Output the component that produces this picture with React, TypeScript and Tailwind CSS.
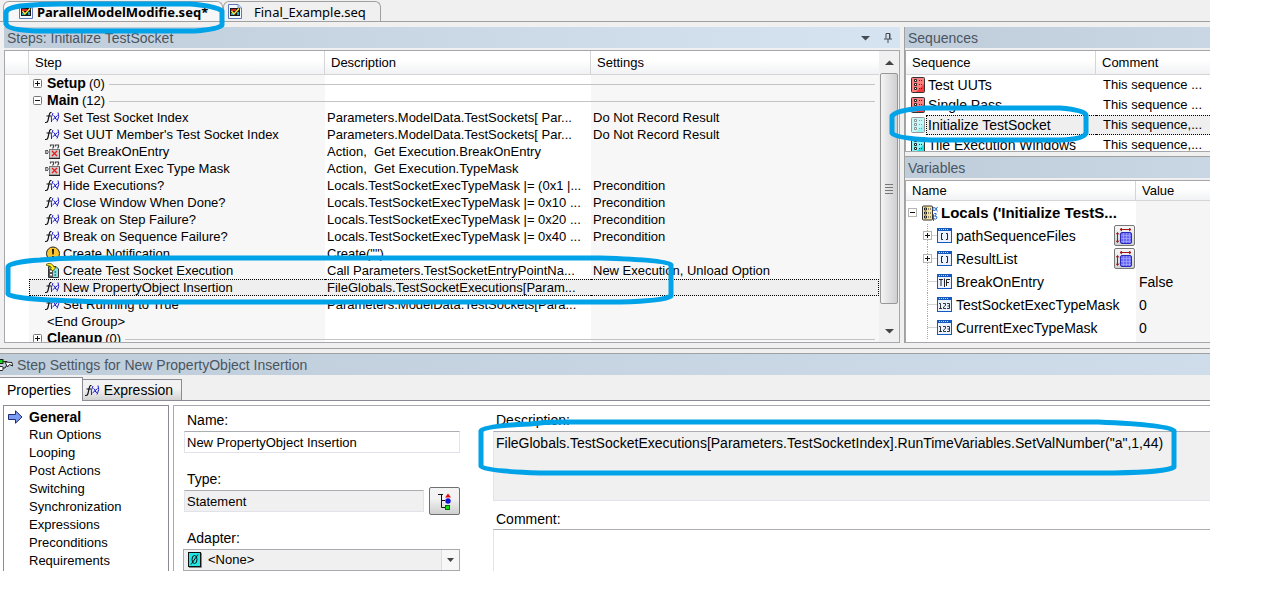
import React from "react";

const FX = () => (
  <svg aria-hidden="true" className="h-[15px] w-[15px] shrink-0" viewBox="0 0 15 15" fill="none">
    <g stroke="#111">
      <path d="M6.5 2.5H5.5Q4.5 3 4 6L3 10.500Q2.500 12.500 1 12.500H0" strokeWidth="1.200" />
      <path d="M1.500 6H6" />
    </g>
    <g stroke="#1a1ac8">
      <path d="M8 3Q5.500 7 6.500 12M13 2.500Q15 6 12 11.500" />
      <path d="M8.500 5.500Q9.500 5.500 10 7.500Q10.500 9.500 12 9.500M12.500 5.500L7.500 10" />
    </g>
  </svg>
);

const Robot = () => (
  <svg aria-hidden="true" className="h-[15px] w-[15px] shrink-0" viewBox="0 0 15 15" fill="none">
    <path d="M5.500 2.500V1H8.500V3L7.500 4.500M10.500 2.500V1H13.500V3L12.500 4.500" stroke="#444" strokeWidth="1.200" />
    <path d="M3 6.500H.8V9.500H3M2 8H5" stroke="#555" strokeWidth="1.200" />
    <rect x="4.500" y="5.500" width="10" height="8.500" fill="#cbcbcb" stroke="#777" />
    <path d="M7 7L12 12M12 7L7 12" stroke="#f01818" strokeWidth="1.200" />
    <path d="M4 14.500H15V6" stroke="#222" />
  </svg>
);

const Notice = () => (
  <svg aria-hidden="true" className="h-[15px] w-[15px] shrink-0" viewBox="0 0 15 15">
    <circle cx="8" cy="7.500" r="6.500" fill="#fdc52d" stroke="#222" />
    <path d="M7 3H9L8.700 8.500H7.300ZM7 10H9V12H7Z" fill="#111" />
  </svg>
);

const CallSeq = () => (
  <svg aria-hidden="true" className="h-[15px] w-[15px] shrink-0" viewBox="0 0 15 15">
    <path d="M3.500 3.500H11L13.500 6V14.500H3.500Z" fill="#7ee4e4" stroke="#333" />
    <path d="M4 6H8V14H4Z" fill="#555" />
    <path d="M5 7.500H7V9H5ZM5 11H7V12.500H5Z" fill="#fff" />
    <path d="M9.500 9H11M9.500 12H11" stroke="#222" />
    <path d="M1.500 1Q7 -1 9 4H11L8 8L4.500 5H6.500Q5.500 2 1.500 2.500Z" fill="#ffee20" stroke="#554d00" strokeWidth=".8" />
  </svg>
);

const FileIcon = () => (
  <svg aria-hidden="true" className="h-[15px] w-[14px] shrink-0" viewBox="0 0 14 15">
    <path d="M.5.500H10L13.500 4V14.500H.5Z" fill="#f4f8ff" stroke="#5b79b9" />
    <path d="M10 .5V4H13.500" fill="#c6d6ed" stroke="#7b92c2" />
    <rect x="2" y="4" width="10" height="8" fill="#181818" />
    <path d="M3 5H8V7H3Z" fill="#d82424" />
    <path d="M3 9H6V11H3ZM9 8H11V11H9Z" fill="#23a6b8" />
    <path d="M3.500 7L6 10L11 4.500" fill="none" stroke="#ffe936" strokeWidth="1.400" />
  </svg>
);

const SeqIcon = ({ light, dark, faded = false }: { light: string; dark: string; faded?: boolean }) => (
  <svg aria-hidden="true" className={faded ? "h-4 w-[14px] shrink-0 opacity-50" : "h-4 w-[14px] shrink-0"} viewBox="0 0 14 16" fill="none">
    <rect x=".5" y=".5" width="13" height="15" rx="1" fill={light} stroke="#333" />
    <path d="M13 7V15H5Z" fill={dark} />
    <path d="M3.500 2.500H5.500V4.500H3.500ZM3.500 6.500H5.500V8.500H3.500ZM3.500 10.500H5.500V12.500H3.500Z" stroke="#222" fill="#fff" />
    <path d="M8 3.500H12M8 7.500H12M8 11.500H12" stroke="#333" strokeDasharray="1 1" />
  </svg>
);

const LocalsIcon = () => (
  <svg aria-hidden="true" className="h-4 w-4 shrink-0" viewBox="0 0 16 16" fill="none">
    <rect x=".5" y="1" width="10" height="14" rx="1" fill="#f8e3a0" stroke="#333" />
    <path d="M2.500 3H4.500V5H2.500ZM2.500 7H4.500V9H2.500ZM2.500 11H4.500V13H2.500Z" stroke="#222" fill="#fff" />
    <path d="M6 4H9M6 8H9M6 12H9" stroke="#222" strokeDasharray="1 1" />
    <path d="M15.500 2Q13.500 6.500 11.500 5.500Q10 4 11.500 2.500Q13.500 1.500 15.500 6.500" stroke="#1d6cc4" fill="#fff" />
    <path d="M11.500 16V9.500Q12 8 14 8.500Q15 10 12.500 11Q15.500 11 15 13Q13.500 15 11.500 13.500" stroke="#1d6cc4" fill="#fff" />
  </svg>
);

const VarIcon = ({ kind }: { kind: string }) => (
  <svg aria-hidden="true" className="h-[15px] w-[15px] shrink-0" viewBox="0 0 15 15" fill="none">
    <rect x=".5" y=".5" width="14" height="14" fill="#eaf3ff" stroke="#1458c0" />
    <path d="M1 1H14V3H1Z" fill="#1458c0" />
    <path d="M2 1.500H12" stroke="#ffe04a" strokeDasharray="1 1" />
    {kind === "array" && <path d="M6 5.500H4.500V11.500H6M9 5.500H10.500V11.500H9" stroke="#222" />}
    {kind === "bool" && <path d="M2 5.500H6M4 5.500V12M7.500 4.500V13M9.500 12V5.500H13M9.500 8.500H12" stroke="#222" />}
    {kind === "num" && (
      <path d="M2 6.500H3.500V12M2 11.500H5M6 6.500H8.500V8.500L6.500 10V11.500H9M10 6.500H12.500V11.500H10M10.500 9H12.500" stroke="#222" strokeWidth=".9" />
    )}
  </svg>
);

const Expander = ({ open, pale = false }: { open: boolean; pale?: boolean }) => (
  <button type="button" aria-label={open ? "Collapse" : "Expand"} className="block h-[9px] w-[9px] shrink-0">
    <svg className="block h-[9px] w-[9px]" viewBox="0 0 9 9">
      <rect x=".5" y=".5" width="8" height="8" rx={pale ? 0 : 1} fill="#fff" stroke={pale ? "#b4b4b4" : "#777"} />
      <path d={open ? "M2 4.500H7" : "M2 4.500H7M4.500 2V7"} stroke="#111" />
    </svg>
  </button>
);

const stepIcons = { fx: FX, robot: Robot, notice: Notice, call: CallSeq };

type Row = {
  group?: boolean;
  open?: boolean;
  count?: string;
  icon?: keyof typeof stepIcons;
  name: string;
  desc?: string;
  set?: string;
  sel?: boolean;
};

const steps: Row[] = [
  { group: true, name: "Setup", count: "(0)" },
  { group: true, open: true, name: "Main", count: "(12)" },
  { icon: "fx", name: "Set Test Socket Index", desc: "Parameters.ModelData.TestSockets[ Par...", set: "Do Not Record Result" },
  { icon: "fx", name: "Set UUT Member's Test Socket Index", desc: "Parameters.ModelData.TestSockets[ Par...", set: "Do Not Record Result" },
  { icon: "robot", name: "Get BreakOnEntry", desc: "Action,  Get Execution.BreakOnEntry" },
  { icon: "robot", name: "Get Current Exec Type Mask", desc: "Action,  Get Execution.TypeMask" },
  { icon: "fx", name: "Hide Executions?", desc: "Locals.TestSocketExecTypeMask |= (0x1 |...", set: "Precondition" },
  { icon: "fx", name: "Close Window When Done?", desc: "Locals.TestSocketExecTypeMask |= 0x10 ...", set: "Precondition" },
  { icon: "fx", name: "Break on Step Failure?", desc: "Locals.TestSocketExecTypeMask |= 0x20 ...", set: "Precondition" },
  { icon: "fx", name: "Break on Sequence Failure?", desc: "Locals.TestSocketExecTypeMask |= 0x40 ...", set: "Precondition" },
  { icon: "notice", name: "Create Notification", desc: 'Create("")' },
  { icon: "call", name: "Create Test Socket Execution", desc: "Call Parameters.TestSocketEntryPointNa...", set: "New Execution, Unload Option" },
  { icon: "fx", name: "New PropertyObject Insertion", desc: "FileGlobals.TestSocketExecutions[Param...", sel: true },
  { icon: "fx", name: "Set Running to True", desc: "Parameters.ModelData.TestSockets[Para..." },
  { name: "<End Group>" },
  { group: true, name: "Cleanup", count: "(0)" },
];

const sequences = [
  { name: "Test UUTs", comment: "This sequence ...", light: "#ff8080", dark: "#f83a3a" },
  { name: "Single Pass", comment: "This sequence ...", light: "#ff8080", dark: "#f83a3a" },
  { name: "Initialize TestSocket", comment: "This sequence,...", light: "#8cf4f4", dark: "#3ce6e6", sel: true },
  { name: "Tile Execution Windows", comment: "This sequence,...", light: "#8cf4f4", dark: "#20e0e0" },
];

const variables = [
  { name: "pathSequenceFiles", kind: "array", value: "" },
  { name: "ResultList", kind: "array", value: "" },
  { name: "BreakOnEntry", kind: "bool", value: "False" },
  { name: "TestSocketExecTypeMask", kind: "num", value: "0" },
  { name: "CurrentExecTypeMask", kind: "num", value: "0" },
];

const pages = ["General", "Run Options", "Looping", "Post Actions", "Switching", "Synchronization", "Expressions", "Preconditions", "Requirements"];

const th = "border-b border-[#d5d5d5] bg-linear-to-b from-white from-40% to-[#f1f2f4] p-0 text-left font-normal";
const titleBar = "flex h-[21px] shrink-0 items-center bg-linear-to-r from-[#bfcddb] text-[14px] leading-4 text-[#4a5560]";
const label = "block text-[14px] leading-4";
const sunken = "block border border-[#e2e3ea] border-t-[#abadb3] leading-4 outline-none";

const StepRow = ({ row }: { row: Row }) => {
  const Icon = row.icon ? stepIcons[row.icon] : null;
  if (row.group) {
    return (
      <tr>
        <td />
        <td className="h-[17px] bg-[#f7f7f7] p-0">
          <div className="flex items-center pl-1">
            <Expander open={!!row.open} />
            <span className="pl-[5px] text-[14px] font-bold">{row.name}</span>
            <span className="pr-1 pl-[3px]">{row.count}</span>
            <span className="mt-px h-px flex-1 bg-[#c4c4c4]" />
          </div>
        </td>
        <td className="p-0"><div className="mt-px h-px bg-[#c4c4c4]" /></td>
        <td className="bg-[#f7f7f7] p-0"><div className="mt-px mr-1 h-px bg-[#c4c4c4]" /></td>
      </tr>
    );
  }
  const edge = row.sel ? "border-y border-dotted border-black bg-[#efefef] " : "";
  const indent = row.sel ? " gap-[3px] pl-[15px]" : Icon ? " gap-[3px] pl-4" : " pl-[18px]";
  return (
    <tr>
      <td />
      <td className={edge + (row.sel ? "h-[17px] border-l p-0" : "h-[17px] bg-[#f7f7f7] p-0")}>
        <div className={"flex h-[15px] items-center" + indent}>
          {Icon && <Icon />}
          <span>{row.name}</span>
        </div>
      </td>
      <td className={edge + "p-0 pl-[2px] whitespace-pre"}>{row.desc}</td>
      <td className={edge + (row.sel ? "border-r p-0" : "bg-[#f7f7f7] p-0 pl-[2px]")}>{row.set}</td>
    </tr>
  );
};

const Steps = () => (
  <section className="flex min-w-0 flex-1 flex-col pl-1">
    <div className={titleBar + " to-[#d6e4f2] pl-[3px]"}>
      <h2 className="flex-1">Steps: Initialize TestSocket</h2>
      <button type="button" aria-label="Menu" className="mr-[14px] block">
        <svg className="block h-2 w-[9px]" viewBox="0 0 9 8"><path d="M0 2H9L4.500 6.500Z" fill="#444c55" /></svg>
      </button>
      <button type="button" aria-label="Pin" className="mr-2 block">
        <svg className="block h-[10px] w-2" viewBox="0 0 8 10" fill="none" stroke="#444c55">
          <path d="M2 5.500V.5H6V5.500M0 6H8M4 6V10" /><path d="M5.500 1V6" />
        </svg>
      </button>
    </div>
    <div className="mt-[2px] flex min-h-0 flex-1 overflow-hidden border border-[#a5a7ad] bg-white">
      <div className="min-w-0 flex-1 bg-[linear-gradient(90deg,#fff_586px,#f7f7f7_586px)]">
        <table className="w-full table-fixed border-separate border-spacing-0 text-[13px] leading-[15px]">
          <colgroup>
            <col className="w-6" />
            <col className="w-[296px]" />
            <col className="w-[266px]" />
            <col />
          </colgroup>
          <thead>
            <tr>
              <th aria-label="Breakpoints" className={th + " h-6 border-r"} />
              <th className={th + " border-r pl-[6px]"}>Step</th>
              <th className={th + " border-r pl-[6px]"}>Description</th>
              <th className={th + " pl-[6px]"}>Settings</th>
            </tr>
          </thead>
          <tbody>{steps.map((r) => <StepRow key={r.name} row={r} />)}</tbody>
        </table>
      </div>
      <div className="flex w-5 shrink-0 flex-col items-center bg-[#f0f0f0]">
        <button type="button" aria-label="Scroll up" className="flex h-[22px] w-full items-center justify-center">
          <svg className="block h-[5px] w-[9px]" viewBox="0 0 9 5"><path d="M0 5H9L4.500 .5Z" fill="#444" /></svg>
        </button>
        <div className="flex w-[18px] flex-1 flex-col items-center justify-center gap-[2px] rounded-xs border border-[#979797] bg-linear-to-r from-[#f4f4f4] to-[#cfcfd2]">
          <span className="h-px w-2 bg-[#777]" />
          <span className="h-px w-2 bg-[#777]" />
          <span className="h-px w-2 bg-[#777]" />
          <span className="h-px w-2 bg-[#777]" />
        </div>
        <button type="button" aria-label="Scroll down" className="mt-5 flex h-[18px] w-full items-start justify-center pt-[5px]">
          <svg className="block h-[5px] w-[9px]" viewBox="0 0 9 5"><path d="M0 0H9L4.500 4.500Z" fill="#444" /></svg>
        </button>
      </div>
    </div>
  </section>
);

const Sequences = () => (
  <section className="flex flex-col">
    <h2 className={titleBar + " to-[#c9d6e4] pl-[3px]"}>Sequences</h2>
    <div className="mt-[2px] h-[102px] overflow-hidden border border-r-0 border-[#a5a7ad] bg-white">
      <table className="w-full table-fixed border-separate border-spacing-0 text-[13px] leading-4">
        <colgroup><col className="w-[190px]" /><col /></colgroup>
        <thead>
          <tr>
            <th className={th + " h-6 border-r pl-[6px]"}>Sequence</th>
            <th className={th + " pl-[6px]"}>Comment</th>
          </tr>
        </thead>
        <tbody>
          {sequences.map((s) => (
            <tr key={s.name}>
              <td className="h-5 p-0 text-[14px]">
                <div className="flex h-5 items-center gap-px pl-[5px]">
                  <SeqIcon light={s.light} dark={s.dark} faded={s.sel} />
                  <span className={s.sel ? "h-5 flex-1 border-y border-l border-dotted border-black bg-[#efefef] pt-px pl-px whitespace-nowrap" : "pl-[2px] whitespace-nowrap"}>{s.name}</span>
                </div>
              </td>
              <td className={s.sel ? "border-y border-dotted border-black bg-[#efefef] p-0 pl-[7px] whitespace-nowrap" : "p-0 pl-[7px] whitespace-nowrap"}>{s.comment}</td>
            </tr>
          ))}
        </tbody>
      </table>
    </div>
  </section>
);

const SizeButton = ({ name }: { name: string }) => (
  <button type="button" aria-label={"Resize " + name} className="mr-px ml-auto flex h-[21px] w-[21px] items-center justify-center rounded-xs border border-[#777] bg-linear-to-b from-[#f7f7f7] to-[#d0d0d0]">
    <svg className="block h-4 w-[17px] shrink-0" viewBox="0 0 17 16" fill="none">
      <rect x="4.500" y="4.500" width="11" height="11" rx="1.500" fill="#6a6af6" stroke="#2a2ab8" />
      <path d="M7.500 5V15M10.500 5V15M13.500 5V15M5 7.500H15M5 10.500H15M5 13.500H15" stroke="#a3a6ff" strokeWidth=".7" />
      <path d="M4 1.500H15M6 0L4 1.500L6 3M13 0L15 1.500L13 3M1.500 5V14M0 6.500L1.500 4.500L3 6.500M0 12.500L1.500 14.500L3 12.500" stroke="#a01818" />
    </svg>
  </button>
);

const Variables = () => (
  <section className="mt-1 flex min-h-0 flex-1 flex-col border-t border-[#a0a0a0]">
    <h2 className={titleBar + " to-[#c9d6e4] pl-[3px]"}>Variables</h2>
    <div className="mt-[2px] min-h-0 flex-1 overflow-hidden border border-r-0 border-[#a5a7ad] bg-[linear-gradient(90deg,#fff_230px,#f5f5f5_230px)]">
      <table className="w-full table-fixed border-separate border-spacing-0 text-[14px] leading-4">
        <colgroup><col className="w-[230px]" /><col /></colgroup>
        <thead>
          <tr className="text-[13px]">
            <th className={th + " h-5 border-r pl-[6px]"}>Name</th>
            <th className={th + " pl-[6px]"}>Value</th>
          </tr>
        </thead>
        <tbody>
          <tr>
            <td className="h-[23px] p-0">
              <div className="flex items-center pl-[2px] whitespace-nowrap">
                <Expander open pale />
                <span className="w-[5px]" />
                <LocalsIcon />
                <span className="pl-[3px] text-[15px] font-bold">Locals ('Initialize TestS...</span>
              </div>
            </td>
            <td />
          </tr>
          {variables.map((v) => (
            <tr key={v.name}>
              <td className="p-0">
                <div className="flex h-[23px] items-center whitespace-nowrap">
                  <div className="grid h-full w-[31px] shrink-0 place-items-center pl-3 *:col-start-1 *:row-start-1">
                    <svg aria-hidden="true" className="block h-[23px] w-[19px]" viewBox="0 0 19 23" fill="none" stroke="#aaa" strokeDasharray="1 1">
                      <path d="M9.500 0V23M9.500 11.500H19" />
                    </svg>
                    {v.kind === "array" && <Expander open={false} pale />}
                  </div>
                  <VarIcon kind={v.kind} />
                  <span className="pl-1">{v.name}</span>
                  {v.kind === "array" && <SizeButton name={v.name} />}
                </div>
              </td>
              <td className="p-0 pl-[3px]">{v.value}</td>
            </tr>
          ))}
        </tbody>
      </table>
    </div>
  </section>
);

const FileTabs = () => (
  <div role="tablist" className="flex h-[22px] items-end border-b border-[#a0a0a0] pl-[3px] font-['Noto_Sans',sans-serif] text-[13px] leading-4">
    <button type="button" role="tab" aria-selected="true" className="flex h-5 w-[220px] items-center gap-1 rounded-t-md border border-b-0 border-[#a0a0a0] bg-[#f7f7f7] pl-[15px] font-bold whitespace-nowrap">
      <FileIcon />ParallelModelModifie.seq*
    </button>
    <button type="button" role="tab" aria-selected="false" className="flex h-5 w-[158px] items-center gap-3 rounded-t-md border border-b-0 border-[#a0a0a0] pl-1 whitespace-nowrap">
      <FileIcon />Final_Example.seq
    </button>
  </div>
);

const StepSettings = () => (
  <section className="border-t border-[#a0a0a0]">
    <div className={titleBar + " to-[#cfdcea] gap-1"}>
      <svg aria-hidden="true" className="block h-[14px] w-[13px]" viewBox="0 0 13 14" fill="none" stroke="#222">
        <rect x="-2" y="1.500" width="5" height="4" fill="#13d813" />
        <rect x="-2" y="8.500" width="5" height="4" rx="1" fill="#fff" />
        <path d="M3 3.500H7L9 5.500M3 10H5L7 6.500" />
        <path d="M5 4L12 4.500L12.500 8L9.500 6.500L7.500 9Z" fill="#fff" />
      </svg>
      <h2>Step Settings for New PropertyObject Insertion</h2>
    </div>
    <div role="tablist" className="flex h-[26px] items-end border-b border-[#8b8b93] bg-[#f0f0f0] text-[14px] leading-4">
      <button type="button" role="tab" aria-selected="true" className="-mb-px h-6 border-t border-r border-[#8b8b93] bg-white pr-[11px] pl-[7px]">Properties</button>
      <button type="button" role="tab" aria-selected="false" className="flex h-[21px] items-center gap-1 border-t border-r border-[#8b8b93] bg-linear-to-b from-[#f2f2f2] from-45% to-[#d2d2d2] pr-2 pl-[2px]">
        <FX />Expression
      </button>
    </div>
    <div className="flex bg-white pt-1 pl-[3px]">
      <nav className="w-[166px] shrink-0 border border-b-0 border-[#8b8b93] pt-[2px] text-[13px] leading-[18px]">
        {pages.map((p, i) => (
          <a key={p} href={"#" + p.replace(" ", "-").toLowerCase()} className={i === 0 ? "flex items-center gap-[6px] pl-1 text-[14px] font-bold" : "block pl-[25px]"}>
            {i === 0 && (
              <svg aria-hidden="true" className="block h-[14px] w-[15px]" viewBox="0 0 15 14">
                <path d="M.5 4.500H7.500V.8L14 7L7.500 13.200V9.500H.5Z" fill="#7c9cf2" stroke="#1c2c78" />
              </svg>
            )}
            <span>{p}</span>
          </a>
        ))}
      </nav>
      <form className="ml-1 flex min-w-0 flex-1 border-t border-l border-[#a9a9b0] pt-[6px] pl-[9px]">
        <div className="w-[277px] shrink-0">
          <label htmlFor="name" className={label + " pl-1"}>Name:</label>
          <input id="name" defaultValue="New PropertyObject Insertion" className={sunken + " mt-[3px] ml-px h-[22px] w-[276px] px-[2px] text-[13px]"} />
          <label htmlFor="type" className={label + " mt-[18px] pl-1"}>Type:</label>
          <div className="mt-[3px] flex h-[22px] items-center justify-between pl-px">
            <input id="type" readOnly value="Statement" className={sunken + " h-[22px] w-[240px] bg-[#f0f0f0] px-[2px] text-[13px]"} />
            <button type="button" aria-label="Browse types" className="flex h-7 w-[31px] items-center justify-center rounded-xs border border-[#707070] bg-linear-to-b from-[#f3f3f3] from-40% to-[#cfcfcf]">
              <svg className="block h-[17px] w-[15px]" viewBox="0 0 15 17" fill="none">
                <path d="M1 1.500H6M4.500 1.500V14.500H8M4.500 7.500H8" stroke="#111" />
                <path d="M8 4.500L11 .5L14 4.500Z" fill="#e01010" />
                <circle cx="11" cy="8" r="2.700" fill="#1010e0" />
                <rect x="8.500" y="12.500" width="4" height="4" fill="#10e010" stroke="#076b07" />
              </svg>
            </button>
          </div>
          <label htmlFor="adapter" className={label + " mt-[18px] pl-1"}>Adapter:</label>
          <div className="relative mt-[3px]">
            <select id="adapter" className="block h-[22px] w-full appearance-none border border-[#a9a9b0] bg-[#f0f0f0] pl-6 text-[13px] leading-4">
              <option>&lt;None&gt;</option>
            </select>
            <svg aria-hidden="true" className="pointer-events-none absolute top-[3px] left-[5px] h-4 w-[14px]" viewBox="0 0 14 16" fill="none">
              <path d="M13.500 1V15.500H1" stroke="#888" />
              <rect x=".5" y=".5" width="12" height="14" fill="#22e6e6" stroke="#111" />
              <ellipse cx="6.500" cy="7.500" rx="2.500" ry="4" stroke="#111" />
              <path d="M3 12.500L10 2.500" stroke="#111" />
            </svg>
            <div className="pointer-events-none absolute top-px right-px flex h-5 w-[18px] items-center justify-center border-l border-[#ddd] bg-[#f7f7f7]">
              <svg className="block h-1 w-[7px]" viewBox="0 0 7 4"><path d="M0 0H7L3.500 4Z" fill="#444" /></svg>
            </div>
          </div>
        </div>
        <div className="ml-[33px] min-w-0 flex-1">
          <label htmlFor="description" className={label + " pl-[3px]"}>Description:</label>
          <textarea
            id="description"
            readOnly
            value={'FileGlobals.TestSocketExecutions[Parameters.TestSocketIndex].RunTimeVariables.SetValNumber("a",1,44)'}
            className={sunken + " mt-[3px] h-[70px] w-full resize-none border-r-0 bg-[#f0f0f0] px-[2px] pt-[3px] text-[14px]"}
          />
          <label htmlFor="comment" className={label + " mt-[10px] pl-[3px]"}>Comment:</label>
          <textarea id="comment" className={sunken + " mt-[2px] h-[42px] w-full resize-none border-r-0 border-b-0 bg-white px-[2px] text-[14px]"} />
        </div>
      </form>
    </div>
  </section>
);

export default function App() {
  return (
    <main className="relative min-h-screen overflow-hidden bg-white pr-[54px] font-['Liberation_Sans',Arial,sans-serif] text-black">
      <div className="bg-[#f0f0f0]">
        <FileTabs />
        <div className="flex h-[321px] pt-[5px]">
          <Steps />
          <div className="ml-1 flex w-[306px] shrink-0 flex-col border-l border-[#a0a0a0]">
            <Sequences />
            <Variables />
          </div>
        </div>
        <div className="mt-[5px] mb-1 h-px bg-[#a0a0a0]" />
        <StepSettings />
      </div>
      <svg aria-hidden="true" className="pointer-events-none absolute top-0 left-0 h-[600px] w-[1264px]" viewBox="0 0 1264 600" fill="none" stroke="#00a2e8" strokeWidth="5" strokeLinejoin="round">
        <path d="M6 24V13Q6 8 20 6Q40 4 60 4H190Q216 6 222 11V25Q219 29 195 31H36Q8 30 6 24Z" />
        <path d="M892 133V116Q896 110 925 108H1060Q1084 110 1086 115V133Q1084 139 1062 140H930Q895 138 892 133Z" />
        <path d="M8 294V267Q9 262 40 260Q60 258 80 258H600Q668 260 671 265V296Q664 301 620 302H110Q10 300 8 294Z" />
        <path d="M481 466V431Q484 426 530 424Q545 422 560 422H1098Q1170 425 1174 431V467Q1168 472 1114 473H540Q484 471 481 466Z" />
      </svg>
    </main>
  );
}
